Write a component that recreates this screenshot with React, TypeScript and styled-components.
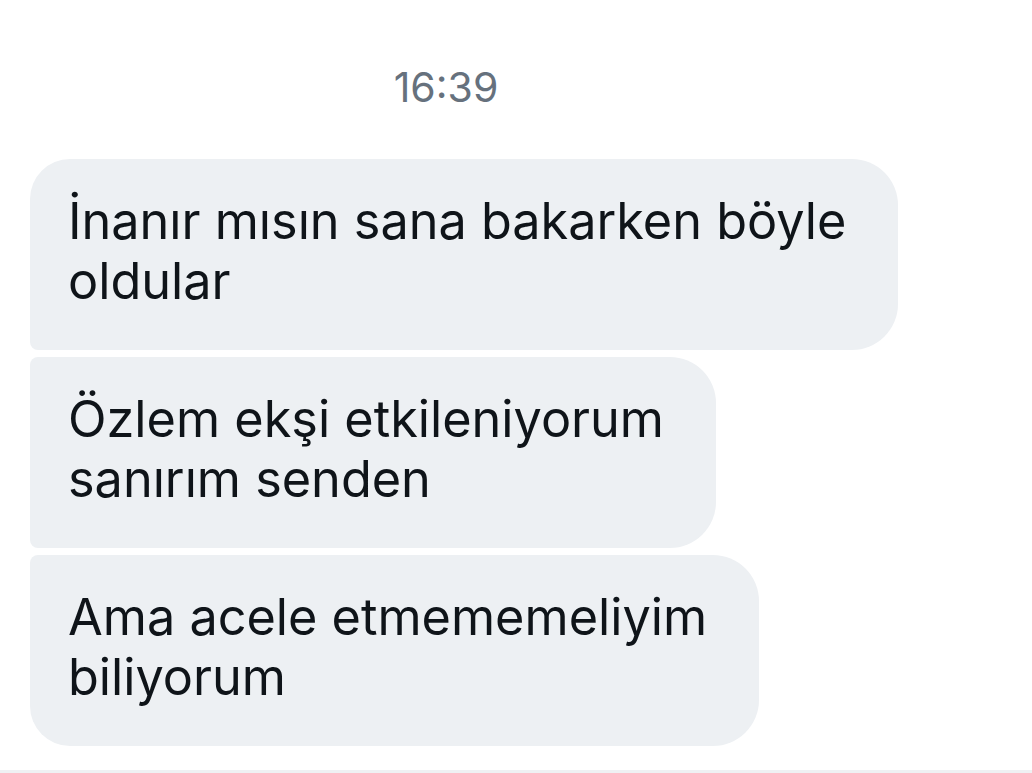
import React from "react";
import styled, { createGlobalStyle } from "styled-components";

const Global = createGlobalStyle`
  html, body {
    margin: 0;
    padding: 0;
    background: #ffffff;
  }
  body {
    font-family: Inter, "Liberation Sans", Arial, sans-serif;
    -webkit-font-smoothing: antialiased;
  }
`;

const Page = styled.div`
  width: 1032px;
  height: 773px;
  display: flex;
  flex-direction: column;
  box-sizing: border-box;
  overflow: hidden;
`;

const Thread = styled.div`
  flex: 1;
  display: flex;
  flex-direction: column;
  padding: 63px 0 0 30px;
  width: 862px;
  box-sizing: border-box;
`;

const Time = styled.div`
  text-align: center;
  font-size: 41px;
  line-height: 48px;
  color: #66717d;
  margin-bottom: 48px;
`;

const Group = styled.div`
  display: flex;
  flex-direction: column;
  align-items: flex-start;
  gap: 7px;
`;

type Pos = "first" | "middle" | "last";

const radii: Record<Pos, string> = {
  first: "40px 46px 46px 8px",
  middle: "8px 46px 46px 8px",
  last: "8px 46px 46px 40px",
};

const Bubble = styled.div<{ $pos: Pos }>`
  background: #edf0f3;
  color: #0f1419;
  font-size: 50.4px;
  line-height: 60px;
  padding: 32px 52px 39px 38px;
  border-radius: ${(p) => radii[p.$pos]};
  white-space: pre;
  width: fit-content;
`;

const Divider = styled.div`
  height: 3px;
  background: #eff1f3;
`;

const messages: { text: string; pos: Pos }[] = [
  { text: "İnanır mısın sana bakarken böyle\noldular", pos: "first" },
  { text: "Özlem ekşi etkileniyorum\nsanırım senden", pos: "middle" },
  { text: "Ama acele etmememeliyim\nbiliyorum", pos: "last" },
];

export default function App() {
  return (
    <Page>
      <Global />
      <Thread>
        <Time>16:39</Time>
        <Group>
          {messages.map((m) => (
            <Bubble key={m.text} $pos={m.pos}>
              {m.text}
            </Bubble>
          ))}
        </Group>
      </Thread>
      <Divider />
    </Page>
  );
}
